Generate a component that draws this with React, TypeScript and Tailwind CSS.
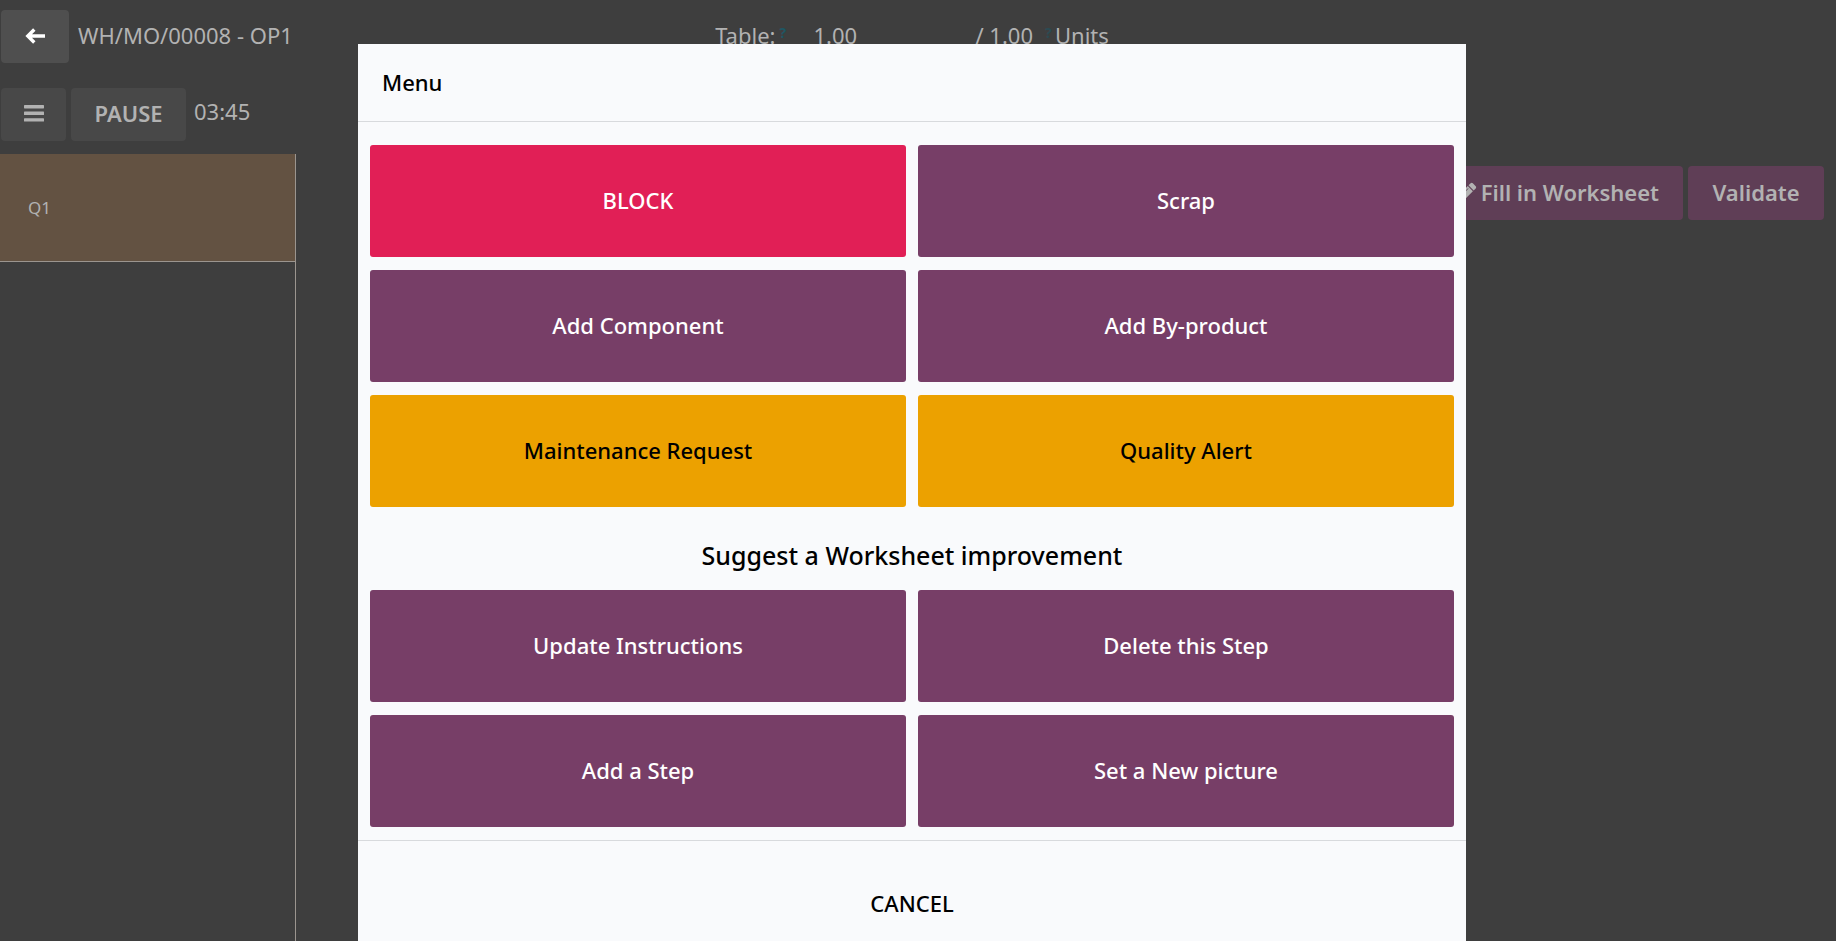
import React from 'react';

type Variant = 'danger' | 'primary' | 'warning';

interface MenuAction {
  label: string;
  variant: Variant;
}

const variantClasses: Record<Variant, string> = {
  danger: 'bg-[#e11f56] text-white',
  primary: 'bg-[#773e67] text-white',
  warning: 'bg-[#eca100] text-black',
};

const mainActions: MenuAction[] = [
  { label: 'BLOCK', variant: 'danger' },
  { label: 'Scrap', variant: 'primary' },
  { label: 'Add Component', variant: 'primary' },
  { label: 'Add By-product', variant: 'primary' },
  { label: 'Maintenance Request', variant: 'warning' },
  { label: 'Quality Alert', variant: 'warning' },
];

const worksheetActions: MenuAction[] = [
  { label: 'Update Instructions', variant: 'primary' },
  { label: 'Delete this Step', variant: 'primary' },
  { label: 'Add a Step', variant: 'primary' },
  { label: 'Set a New picture', variant: 'primary' },
];

const ArrowLeftIcon: React.FC = () => (
  <svg className="h-4 w-5" viewBox="0 0 20 16" fill="none" stroke="currentColor" strokeWidth="3.4" aria-hidden="true">
    <path d="M9.3 1.5 L2.8 8 L9.3 14.5 M3 8 H20" />
  </svg>
);

const BarsIcon: React.FC = () => (
  <svg className="h-[17px] w-5" viewBox="0 0 20 17" fill="currentColor" aria-hidden="true">
    <rect width="20" height="3.4" rx="0.6" />
    <rect y="6.6" width="20" height="3.4" rx="0.6" />
    <rect y="13.2" width="20" height="3.4" rx="0.6" />
  </svg>
);

const PencilIcon: React.FC = () => (
  <svg className="h-[22px] w-5" viewBox="0 0 1536 1792" fill="currentColor" aria-hidden="true">
    <path d="M363 1536l91-91-235-235-91 91v107h128v128h107zm523-928q0-22-22-22-10 0-17 7l-542 542q-7 7-7 17 0 22 22 22 10 0 17-7l542-542q7-7 7-17zm-54-192l416 416-832 832h-416v-416zm683 96q0 53-37 90l-166 166-416-416 166-165q36-38 90-38 53 0 91 38l235 234q37 39 37 91z" />
  </svg>
);

const ActionGrid: React.FC<{ actions: MenuAction[] }> = ({ actions }) => (
  <div className="grid grid-cols-2 gap-x-3 gap-y-[13px]">
    {actions.map((action) => (
      <button
        key={action.label}
        type="button"
        className={`h-28 rounded-[3px] pb-0.5 font-medium ${variantClasses[action.variant]}`}
      >
        {action.label}
      </button>
    ))}
  </div>
);

const MenuDialog: React.FC = () => (
  <div className="absolute inset-0 overflow-hidden pt-11 pr-3">
    <div role="dialog" aria-labelledby="menu-title" className="mx-auto w-full max-w-[1108px] bg-[#f9fafc] text-black">
      <header className="flex h-[78px] items-center border-b border-[#d8dadd] px-6 pb-0.5">
        <h2 id="menu-title" className="font-medium">Menu</h2>
      </header>
      <div className="px-3 pt-[23px] pb-[13px]">
        <ActionGrid actions={mainActions} />
        <h3 className="pt-[30px] pb-[17px] text-center text-[25px] leading-9 font-medium">
          Suggest a Worksheet improvement
        </h3>
        <ActionGrid actions={worksheetActions} />
      </div>
      <footer className="border-t border-[#d8dadd] p-2">
        <button type="button" className="h-[108px] w-full font-medium">CANCEL</button>
      </footer>
    </div>
  </div>
);

const App: React.FC = () => {
  return (
    <div className="relative flex h-screen flex-col overflow-hidden bg-[#3e3e3e] font-['Noto_Sans',sans-serif] text-[22px] leading-8 text-[#b2b2b2]">
      {/* Work order bar */}
      <header className="relative flex items-center pt-[10px] pb-[25px] pl-px">
        <button type="button" aria-label="Back" className="flex h-[53px] w-[68px] items-center justify-center rounded bg-[#4f4f4f] pb-0.5 text-white">
          <ArrowLeftIcon />
        </button>
        <h1 className="pb-1 pl-[9px]">WH/MO/00008 - OP1</h1>
        <div className="absolute inset-x-0 flex justify-center pr-3 pb-1">
          <label htmlFor="quantity">Table:</label>
          <span className="w-[38px] pl-1 text-sm leading-7 font-bold text-[#1f5663]">?</span>
          <input id="quantity" defaultValue="1.00" className="w-[162px] bg-transparent outline-none" />
          <span>/ 1.00</span>
          <span className="w-[22px] pl-3 text-sm leading-7 font-bold text-[#2b4b53]">?</span>
          <span>Units</span>
        </div>
      </header>

      <div className="flex items-center gap-[5px] pb-[13px] pl-px">
        <button type="button" aria-label="Menu" className="flex h-[53px] w-[65px] items-center justify-center rounded bg-[#484848] pb-0.5">
          <BarsIcon />
        </button>
        <button type="button" className="h-[53px] w-[115px] rounded bg-[#484848] pb-1 font-semibold">PAUSE</button>
        <time className="pb-2 pl-[3px]">03:45</time>
      </div>

      <div className="flex flex-1">
        <aside className="w-[296px] border-r border-[#9b958f]">
          <div className="flex h-[108px] items-center border-b border-[#9b958f] bg-[#635242] pl-7 text-[17px]">Q1</div>
        </aside>
        <main className="flex flex-1 items-start justify-end gap-[5px] pt-3 pr-3">
          <button type="button" className="flex h-[54px] items-center gap-1 rounded bg-[#5f3e56] px-6 pb-0.5 font-semibold">
            <PencilIcon />
            Fill in Worksheet
          </button>
          <button type="button" className="h-[54px] w-[136px] rounded bg-[#5f3e56] pb-0.5 font-semibold">Validate</button>
        </main>
      </div>

      <MenuDialog />
    </div>
  );
};

export default App;
